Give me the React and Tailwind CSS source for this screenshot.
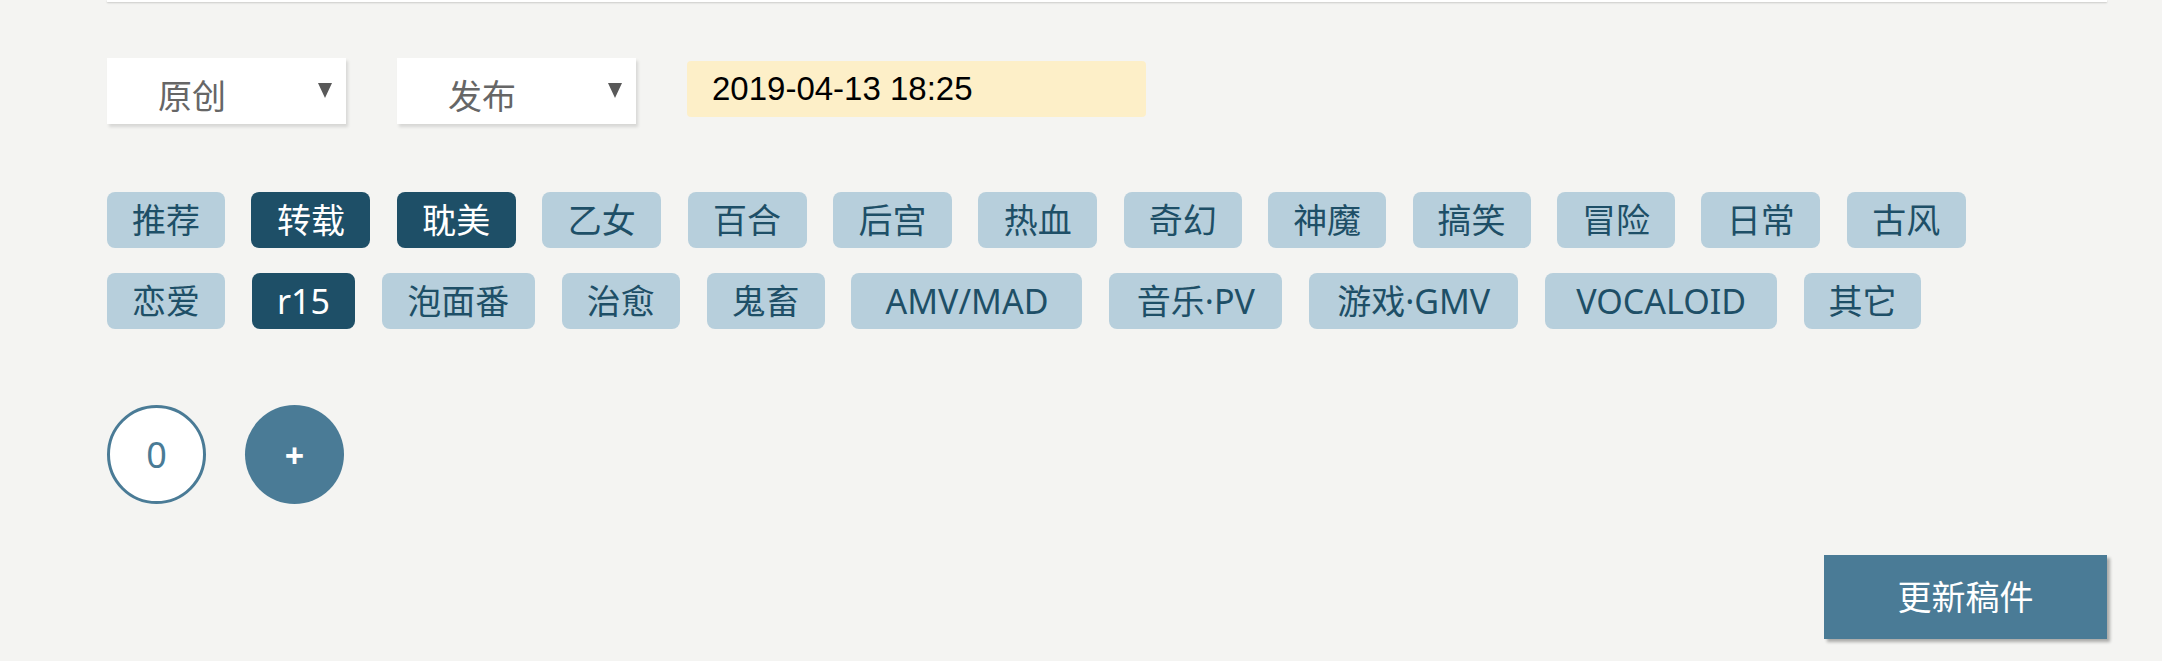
import React from "react";

const row1 = [
  { t: "推荐", w: "w-[118px]" },
  { t: "转载", w: "w-[119px]", on: true },
  { t: "耽美", w: "w-[119px]", on: true },
  { t: "乙女", w: "w-[119px]" },
  { t: "百合", w: "w-[119px]" },
  { t: "后宫", w: "w-[119px]" },
  { t: "热血", w: "w-[119px]" },
  { t: "奇幻", w: "w-[118px]" },
  { t: "神魔", w: "w-[118px]" },
  { t: "搞笑", w: "w-[118px]" },
  { t: "冒险", w: "w-[118px]" },
  { t: "日常", w: "w-[119px]" },
  { t: "古风", w: "w-[119px]" },
];

const row2 = [
  { t: "恋爱", w: "w-[118px]" },
  { t: "r15", w: "w-[103px]", on: true },
  { t: "泡面番", w: "w-[153px]" },
  { t: "治愈", w: "w-[118px]" },
  { t: "鬼畜", w: "w-[118px]" },
  { t: "AMV/MAD", w: "w-[231px]" },
  { t: "音乐·PV", w: "w-[173px]" },
  { t: "游戏·GMV", w: "w-[209px]" },
  { t: "VOCALOID", w: "w-[232px]" },
  { t: "其它", w: "w-[117px]" },
];

const font = "font-['Noto_Sans','Noto_Sans_CJK_SC',sans-serif]";

function Tag({ t, w, on }) {
  return (
    <div
      className={`${w} shrink-0 h-[56px] flex items-center justify-center rounded-[8px] text-[34px] leading-none ${
        on ? "bg-[#1e4f67] text-white" : "bg-[#b7cfdc] text-[#1e4f67]"
      }`}
    >
      {t}
    </div>
  );
}

function Select({ label }) {
  return (
    <div className="w-[239px] h-[66px] bg-white shadow-[2px_3px_3px_rgba(0,0,0,0.12)] flex items-start pt-[21px] pl-[51px] pr-[14px] relative">
      <span className="text-[34px] leading-none text-[#666666] flex-1">{label}</span>
      <svg width="14" height="15" viewBox="0 0 14 15" className="mt-[4px]">
        <polygon points="0,0 14,0 7,15" fill="#595959" />
      </svg>
    </div>
  );
}

export default function App() {
  return (
    <div className={`w-[2162px] h-[661px] overflow-hidden bg-[#f4f4f2] ${font}`}>
      <div className="pl-[107px] w-[2107px] flex flex-col">
        <div className="h-[2px] bg-white shadow-[0_1px_2px_rgba(0,0,0,0.18)]" />

        <div className="mt-[56px] flex items-start gap-[51px]">
          <Select label="原创" />
          <Select label="发布" />
          <div className="mt-[3px] w-[459px] h-[56px] rounded-[4px] bg-[#fdefc8] flex items-center pl-[25px] font-['Liberation_Sans',sans-serif] text-[33px] text-black">
            2019-04-13 18:25
          </div>
        </div>

        <div className="mt-[68px] flex flex-col gap-[25px]">
          <div className="flex gap-[26.4px]">
            {row1.map((x) => (
              <Tag key={x.t} {...x} />
            ))}
          </div>
          <div className="flex gap-[26.9px]">
            {row2.map((x) => (
              <Tag key={x.t} {...x} />
            ))}
          </div>
        </div>

        <div className="mt-[76px] flex gap-[39px]">
          <div className="w-[99px] h-[99px] rounded-full border-[3px] border-[#4a7b96] bg-white flex items-center justify-center text-[36px] text-[#4a7b96] leading-none">
            0
          </div>
          <div className="w-[99px] h-[99px] rounded-full bg-[#4a7b96] flex items-center justify-center text-[34px] font-bold text-white leading-none">
            +
          </div>
        </div>

        <div className="mt-[51px] flex justify-end">
          <button className="w-[283px] h-[84px] bg-[#4a7b96] text-white text-[34px] leading-none shadow-[3px_3px_3px_rgba(0,0,0,0.3)] flex items-center justify-center">
            更新稿件
          </button>
        </div>
      </div>
    </div>
  );
}
